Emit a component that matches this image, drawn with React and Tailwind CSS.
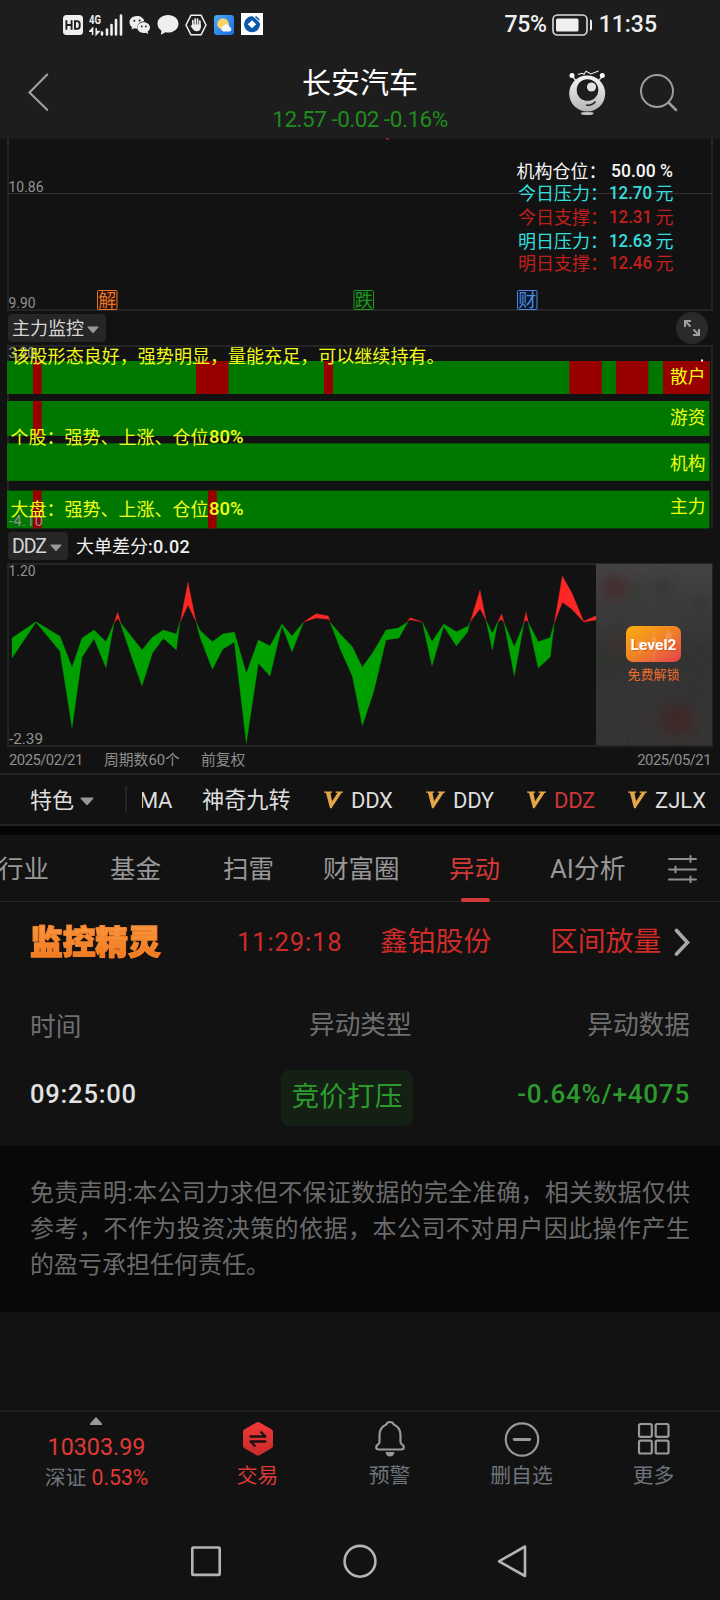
import React from 'react';

const CJK = "font-['Roboto','Noto_Sans_CJK_SC',sans-serif]";

/* ---------- status bar ---------- */
function StatusBar() {
  return (
    <div className="flex h-12 items-center pl-[63px] pr-[63px] pt-px text-[#efefef]">
      <svg width="20" height="20" className="mt-px" viewBox="0 0 20 20">
        <rect width="20" height="20" rx="3.500" fill="#efefef" />
        <path d="M3.400 5.200v9.600M8.600 5.200v9.600M3.400 10h5.200" stroke="#1d1d1d" strokeWidth="1.900" fill="none" />
        <path d="M12 6.100h1.800q2.900 0 2.900 2.600v2.600q0 2.600-2.900 2.600H12z" stroke="#1d1d1d" strokeWidth="1.900" fill="none" />
      </svg>
      <svg width="34" height="24" className="ml-[6px]" viewBox="0 0 34 24">
        <text x="0" y="10.500" fontFamily="Roboto" fontWeight="700" fontSize="12.500" fill="#efefef" textLength="12" lengthAdjust="spacingAndGlyphs">4G</text>
        <path d="M3.600 22v-6M.8 18.300l2.800-3v3zM7.200 15v6M7.200 21.600l2.800-3h-2.800z" stroke="#efefef" strokeWidth="1.500" fill="#efefef" />
        <path d="M13 19.500v2M18 16.500v5M22.500 12v9.500M27 7v14.500M32 2.500v19" stroke="#efefef" strokeWidth="2.600" strokeLinecap="round" />
      </svg>
      <svg width="22" height="20" className="ml-[6px]" viewBox="0 0 22 20">
        <path d="M8 1C3.600 1 .5 3.800.5 7.300c0 2 1 3.700 2.600 4.900l-.7 2.400 2.900-1.300q1.300.4 3 .4C7.600 9.500 11 6.300 15.400 6.300 14.600 3 11.600 1 8 1z" fill="#efefef" />
        <path d="M14.700 7.200c-3.700 0-6.400 2.300-6.400 5.400s2.700 5.400 6.400 5.400q1.100 0 2-.3l2.500 1.300-.6-2.200c1.500-1.100 2.400-2.500 2.400-4.200 0-3.100-2.700-5.400-6.300-5.400z" fill="#efefef" />
        <g fill="#1d1d1d"><circle cx="5.400" cy="5.800" r="1" /><circle cx="10.600" cy="5.400" r="1" /><circle cx="12.700" cy="11.400" r=".9" /><circle cx="16.800" cy="11.400" r=".9" /></g>
      </svg>
      <svg width="22" height="22" className="ml-[6px]" viewBox="0 0 22 22">
        <path d="M11 1C5 1 .5 4.800.5 9.800c0 2.900 1.500 5.300 4 6.900L3.800 20.800l4.700-2.500q1.200.3 2.500.3c6 0 10.500-3.800 10.500-8.800S17 1 11 1z" fill="#efefef" />
      </svg>
      <svg width="22" height="22" className="ml-[6px]" viewBox="0 0 22 22">
        <path d="M6 1.200h10L21 11l-5 9.800H6L1 11z" fill="none" stroke="#efefef" strokeWidth="1.500" strokeLinejoin="round" />
        <path d="M7.800 6.500v6M10.200 4.800v7M12.600 5.200v7M14.900 7v6" stroke="#efefef" strokeWidth="1.700" strokeLinecap="round" />
        <path d="M7 10.500h8.700v3q0 3.700-4 3.700-2.500 0-4-2.200l-2.300-3.300q1-.8 2 .3z" fill="#efefef" />
      </svg>
      <svg width="20" height="20" className="ml-[7px]" viewBox="0 0 20 20">
        <defs><linearGradient id="sky" x1="0" y1="0" x2="1" y2="1"><stop stopColor="#4aa9f6" /><stop offset="1" stopColor="#1a6ce0" /></linearGradient></defs>
        <rect width="20" height="20" rx="3" fill="url(#sky)" />
        <circle cx="9" cy="9" r="5.800" fill="#fbd467" />
        <path d="M9.500 16.500a3 3 0 0 1 .3-5.800 3.400 3.400 0 0 1 6 1.300 2.400 2.400 0 0 1-.3 4.600z" fill="#f4f8fd" />
      </svg>
      <svg width="22" height="22" className="-mt-px ml-[7px]" viewBox="0 0 22 22">
        <rect width="22" height="22" fill="#fff" />
        <circle cx="11" cy="11.300" r="8" fill="#0b57a8" />
        <path d="M11 7.300l4.200 4-4.200 4-4.200-4z" fill="#fff" />
        <path d="M12 2.500l8 7.500" stroke="#fff" strokeWidth="1.200" />
        <path d="M14.500 3.500l3.800 3.500" stroke="#0b57a8" strokeWidth="1.600" />
      </svg>
      <span className="ml-auto mt-px font-['Roboto'] text-[23px] font-medium leading-6 tracking-[-0.300px]">75%</span>
      <svg width="41" height="22" className="ml-[5px]" viewBox="0 0 41 22">
        <rect x="1" y="1" width="34" height="20" rx="4.500" fill="none" stroke="#dcdcdc" strokeWidth="1.600" />
        <rect x="4" y="4.500" width="22.500" height="13" rx="1.500" fill="#efefef" />
        <path d="M38.700 5.500q1.300.5 1.300 2v7q0 1.500-1.300 2h-.7v-11z" fill="#efefef" />
      </svg>
      <span className="ml-[6px] mt-px font-['Roboto'] text-[23px] font-medium leading-6">11:35</span>
    </div>
  );
}

function TitleBar() {
  return (
    <div className="flex h-[90px] items-start justify-between pl-7 pr-[41px]">
      <svg width="22" height="38" className="mt-[25px]" viewBox="0 0 22 38">
        <path d="M19.200 1.500L1.500 19.500l17.700 17.300" fill="none" stroke="#a0a0a0" strokeWidth="2.100" strokeLinecap="round" />
      </svg>
      <div className="ml-[88px] flex w-[260px] flex-col items-center pl-[13px] pt-[18px]">
        <span className="text-[29px] leading-9 text-white">长安汽车</span>
        <span className="mt-[5px] whitespace-nowrap text-[22.500px] leading-6 tracking-[-0.500px] text-[#1f8c1f]">12.57 -0.02 -0.16%</span>
      </div>
      <div className="flex">
        <svg width="38" height="48" className="-ml-px mt-[22px]" viewBox="0 0 38 48">
          <defs><linearGradient id="robot" x1="0" y1="0" x2="0" y2="1"><stop stopColor="#f5f5f5" /><stop offset="1" stopColor="#b5b5b5" /></linearGradient></defs>
          <path d="M5 7l4 5M34 7l-5 5" stroke="#ddd" strokeWidth="1.300" />
          <circle cx="4" cy="5.500" r="2.500" fill="#fff" /><circle cx="34.300" cy="5.500" r="2.500" fill="#fff" />
          <path d="M10 4.500l4-1.200 2 1 2-3 5 2.600 7.500-3" fill="none" stroke="#eee" strokeWidth="1.100" />
          <circle cx="19.200" cy="23.500" r="18" fill="url(#robot)" />
          <circle cx="19.500" cy="20" r="10.800" fill="#1d1d1d" />
          <circle cx="23.500" cy="17" r="4.600" fill="#e0e0e0" />
          <path d="M18 35q6 1 9.500-3.500" fill="none" stroke="#222" strokeWidth="1.500" />
          <ellipse cx="19.200" cy="43.500" rx="6.500" ry="1.600" fill="#c4c4c4" />
        </svg>
        <svg width="40" height="40" className="ml-[33px] mt-[25px]" viewBox="0 0 40 40">
          <circle cx="18" cy="18" r="16" fill="none" stroke="#9c9c9c" strokeWidth="2" />
          <path d="M29.500 29.500l7.500 7.500" stroke="#9c9c9c" strokeWidth="2.600" strokeLinecap="round" />
        </svg>
      </div>
    </div>
  );
}

/* ---------- charts ---------- */
const LEVELS = [
  ['今日压力：', '12.70', 199.500, '#35dede'],
  ['今日支撑：', '12.31', 223.500, '#c01f1c'],
  ['明日压力：', '12.63', 247.500, '#35dede'],
  ['明日支撑：', '12.46', 269.500, '#c01f1c'],
];

function EventTag({ x, label, color, fill }) {
  return (
    <g>
      <rect x={x} y="290.500" width="19.500" height="19" rx="1" fill={fill} stroke={color} strokeWidth="1" />
      <text x={x + 0.800} y="306.500" fontSize="18" fill={color}>{label}</text>
    </g>
  );
}

function PriceChart() {
  return (
    <svg width="720" height="174" viewBox="0 138 720 174" className="block">
      <rect y="138" width="720" height="1" fill="#191919" />
      <path d="M8 138v172h704V138" fill="none" stroke="#252525" strokeWidth="2" />
      <path d="M8 193.500h704" stroke="#303030" />
      <rect x="386" y="138" width="3" height="1.500" fill="#b02020" />
      <g fill="#929292" fontSize="14.500">
        <text x="8.500" y="192" textLength="35" lengthAdjust="spacingAndGlyphs">10.86</text>
        <text x="8.500" y="307.500" textLength="27" lengthAdjust="spacingAndGlyphs">9.90</text>
      </g>
      <g fontSize="18">
        <text x="516.500" y="177.500" fill="#f5f5f5">机构仓位：</text>
        <text x="611" y="177" fill="#f5f5f5" fontWeight="500" textLength="62" lengthAdjust="spacingAndGlyphs">50.00 %</text>
        {LEVELS.map(([name, value, y, color]) => (
          <g key={name} fill={color}>
            <text x="518" y={y}>{name}</text>
            <text x="609" y={y - 0.500} fontWeight="500" textLength="43" lengthAdjust="spacingAndGlyphs">{value}</text>
            <text x="655.500" y={y}>元</text>
          </g>
        ))}
      </g>
      <EventTag x={97.500} label="解" color="#e8762c" fill="#2a1408" />
      <EventTag x={354} label="跌" color="#279427" fill="#0a200a" />
      <EventTag x={517.500} label="财" color="#4f8be0" fill="#0a1626" />
    </svg>
  );
}

const BANDS = [
  { y: 361, h: 33, red: [[33, 8.700], [196, 32.500], [324, 9], [569.300, 32.500], [616, 32.300], [663, 46.500]], label: '散户', ly: 383 },
  { y: 401, h: 35, red: [[33, 8.700]], label: '游资', ly: 423.500 },
  { y: 443.300, h: 37.600, red: [], label: '机构', ly: 469.500 },
  { y: 490.600, h: 37.800, red: [[33, 8.700], [208, 8.700]], label: '主力', ly: 513 },
];

function FlowChart() {
  return (
    <svg width="720" height="186" viewBox="0 344 720 186" className="block">
      <path d="M8 528V346h704v182" fill="none" stroke="#252525" strokeWidth="2" />
      {BANDS.map((b) => (
        <g key={b.label}>
          <rect x="7" y={b.y} width="702.500" height={b.h} fill="#007800" />
          {b.red.map(([x, w]) => <rect key={x} x={x} y={b.y} width={w} height={b.h} fill="#980000" />)}
          <text x="670" y={b.ly} fontSize="17.700" fill="#efff10">{b.label}</text>
        </g>
      ))}
      <rect x="701" y="359.500" width="2" height="2" fill="#fff" />
      <g fill="#929292" fontSize="14.500">
        <text x="8.500" y="358" textLength="27">3.20</text>
        <text x="9" y="526" textLength="34">-4.10</text>
      </g>
      <g fill="#f0ff18" fontSize="18">
        <text x="11.500" y="362.500" textLength="433">该股形态良好，强势明显，量能充足，可以继续持有。</text>
        <text x="10.500" y="443.500" textLength="198">个股：强势、上涨、仓位</text>
        <text x="209" y="443" fontWeight="500" textLength="34.500" lengthAdjust="spacingAndGlyphs">80%</text>
        <text x="10.500" y="515.500" textLength="198">大盘：强势、上涨、仓位</text>
        <text x="209" y="515" fontWeight="500" textLength="34.500" lengthAdjust="spacingAndGlyphs">80%</text>
      </g>
    </svg>
  );
}

const DOWN = [
  'M36 264L108 215 180 259 216 352 246 264 282 240 318 275 342 220 318 353 282 266 246 322 216 533 180 304 108 217 36 324z',
  'M360 216L426 300 457 262 490 240 529 252 540 215 529 300 490 265 457 310 426 408 392 312z',
  'M588 215L601 242 637 275 668 252 703 246 739 370 775 270 810 288 846 222 876 258 911 216 876 306 846 227 810 378 775 340 739 580 703 276 668 298 637 358 601 264z',
  'M990 216L1024 256 1057 290 1087 352 1120 305 1158 240 1195 234 1224 215 1197 264 1158 270 1121 425 1087 527 1057 378 1022 300z',
  'M1267 216L1296 275 1331 222 1369 245 1405 228 1410 214 1403 246 1369 288 1331 229 1296 348z',
  'M1458 211L1477 250 1494 214 1477 300z',
  'M1512 218L1543 290 1572 220 1543 378z',
  'M1584 216L1615 275 1650 263 1663 218 1651 320 1615 354z',
];
const UP = [
  'M342 220L353 187 362 218 353 205z',
  'M541 215L564 97 588 215 564 165z',
  'M911 216L948 191 985 198 990 214 985 208 948 204z',
  'M1223 214L1230 203 1267 216 1230 209z',
  'M1411 215L1440 120 1458 211 1440 176z',
  'M1494 215L1505 192 1513 218 1505 208z',
  'M1571 220L1578 186 1585 216 1578 210z',
  'M1663 219L1687 78 1716 130 1751 214 1788 197 1788 210 1751 216 1716 178 1687 157z',
];

function DdzChart() {
  return (
    <div className="relative">
      <svg width="720" height="186" viewBox="0 562 720 186" className="block">
        <defs>
          <linearGradient id="veil" x1="0" y1="0" x2="0" y2="1"><stop stopColor="#444243" /><stop offset=".5" stopColor="#343333" /><stop offset="1" stopColor="#373434" /></linearGradient>
          <filter id="soft" x="-80%" y="-80%" width="260%" height="260%"><feGaussianBlur stdDeviation="6" /></filter>
          <clipPath id="veilBox"><rect x="596" y="564" width="116" height="181" /></clipPath>
        </defs>
        <path d="M8 564h704v182H8z" fill="none" stroke="#252525" strokeWidth="2" />
        <g transform="translate(0 550) scale(.33333)">
          {DOWN.map((d) => <path key={d} d={d} fill="#00a000" stroke="#00a000" strokeWidth="1" />)}
          {UP.map((d) => <path key={d} d={d} fill="#ff2626" stroke="#e82828" strokeWidth="1" />)}
        </g>
        <g fill="#929292" fontSize="14.500">
          <text x="8.500" y="576" textLength="27" lengthAdjust="spacingAndGlyphs">1.20</text>
          <text x="9" y="743.500" textLength="34" lengthAdjust="spacingAndGlyphs">-2.39</text>
        </g>
        <g clipPath="url(#veilBox)">
          <rect x="596" y="564" width="116" height="181" fill="url(#veil)" />
          <g filter="url(#soft)">
            <circle cx="614" cy="588" r="13" fill="#442f30" />
            <circle cx="634" cy="591" r="7" fill="#303a30" />
            <circle cx="662" cy="590" r="11" fill="#383737" />
            <circle cx="700" cy="603" r="9" fill="#383636" />
            <circle cx="618" cy="644" r="10" fill="#3c302f" />
            <circle cx="604" cy="660" r="10" fill="#2d342d" />
            <circle cx="687" cy="660" r="10" fill="#2d362d" />
            <circle cx="678" cy="720" r="15" fill="#402628" />
            <circle cx="694" cy="694" r="8" fill="#303030" />
            <circle cx="612" cy="738" r="7" fill="#313030" />
          </g>
        </g>
      </svg>
      <div className="absolute left-[596px] top-0 flex w-[115px] flex-col items-center pt-[64px]">
        <div className="relative flex h-9 w-[55px] items-center justify-center rounded-[7px] bg-gradient-to-br from-[#fcae08] via-[#f08125] to-[#e23a48]">
          <svg className="absolute left-0 top-0" width="55" height="36"><path d="M14 12v17M12 16h4v9h-4zM28 6v28M26 12h4v12h-4zM42 3v17M40 7h5v9h-5z" fill="#fff" stroke="#fff" opacity=".16" /></svg>
          <span className="relative mt-[2px] font-['Roboto'] text-[15.500px] font-bold leading-4 text-white [text-shadow:1px_1px_1px_#b0400080]">Level2</span>
        </div>
        <span className="mt-[5px] text-[13px] leading-4 text-[#ea6c2c]">免费解锁</span>
      </div>
    </div>
  );
}

function Caret({ className, width = 12 }) {
  return (
    <svg className={className} width={width} height={width * 0.62} viewBox="0 0 13 8">
      <path d="M1 .5h11q.8.3.3 1L7.200 7.200q-.7.600-1.400 0L.7 1.500Q.2.800 1 .5z" fill="#989898" />
    </svg>
  );
}

/* ---------- indicator tabs ---------- */
function VMark({ className }) {
  return (
    <svg className={className} width="19" height="18" viewBox="0 0 19 18">
      <path d="M0 .5h8.200v1l-1.700.5 1.600 8.300L13.500 2l-2-.5v-1H19v1l-1.500.5L7.500 17.200H6L2 2 0 1.500z" fill="#e2a548" />
    </svg>
  );
}

function IndicatorTabs() {
  return (
    <div className="flex h-[53px] items-center overflow-hidden whitespace-nowrap border-y-2 border-[#252525] pl-[30px] pt-[2px] text-[22px] text-[#dedede]">
      <span className="w-11">特色</span>
      <Caret className="ml-[6px] mt-[2px]" width={14} />
      <div className="-mt-[2px] ml-[31px] h-[27px] w-[2px] bg-[#252525]" />
      <div className="ml-[15px] flex w-[46px] overflow-hidden"><span className="-ml-[3px] tracking-[-0.500px]">MA</span></div>
      <span className="ml-[14px] w-[89px] text-[22.200px]">神奇九转</span>
      <VMark className="-mt-px ml-[33px]" /><span className="ml-[8px] w-[43px] tracking-[-0.300px]">DDX</span>
      <VMark className="-mt-px ml-[32px]" /><span className="ml-[8px] w-[43px] tracking-[-0.300px]">DDY</span>
      <VMark className="-mt-px ml-[31px]" /><span className="ml-[8px] w-[43px] tracking-[-0.300px] text-[#cb3836]">DDZ</span>
      <VMark className="-mt-px ml-[31px]" /><span className="ml-[8px]">ZJLX</span>
    </div>
  );
}

function SectionTabs() {
  return (
    <div className="relative flex h-[67px] items-center whitespace-nowrap border-b border-[#262626] pt-[3px] text-[25.500px] text-[#989898]">
      <span className="-ml-[2px] w-[112px]">行业</span>
      <span className="w-[113px]">基金</span>
      <span className="w-[100px]">扫雷</span>
      <span className="w-[126px]">财富圈</span>
      <span className="w-[101px] text-[#d33a37]">异动</span>
      <span className="w-[118px] text-[25.800px]">AI分析</span>
      <svg width="30" height="28" className="-mt-[2px]" viewBox="0 0 30 28" stroke="#8f8f8f" strokeWidth="2" strokeLinecap="round">
        <path d="M1 4h27M1 14.500h27M1 24.500h27M22.500 1v6M7.500 11.500v6M22.500 21.500v6" />
      </svg>
      <div className="absolute -bottom-px left-[461px] h-1 w-[29px] rounded-sm bg-[#d33a3a]" />
    </div>
  );
}

function Monitor() {
  return (
    <div className="flex h-[244px] flex-col px-[30px] leading-8">
      <div className="mt-[24px] flex h-8 items-center whitespace-nowrap text-[27.800px] text-[#cf2b28]">
        <span className="mt-[2px] w-[207px] bg-gradient-to-b from-[#f99a42] to-[#ee7413] bg-clip-text text-[32.700px] font-black leading-10 text-transparent">
          <span className="[-webkit-text-stroke:1px_#f2842a]">监控精灵</span>
        </span>
        <span className="w-[143px] text-[25.500px] tracking-[0.900px]">11:29:18</span>
        <span className="w-[170px]">鑫铂股份</span>
        <span>区间放量</span>
        <svg className="ml-auto" width="16" height="28" viewBox="0 0 16 28"><path d="M2.500 2.500l11 12-11 11.500" fill="none" stroke="#a8a8a8" strokeWidth="3.600" strokeLinecap="round" /></svg>
      </div>
      <div className="mt-[49px] grid h-8 grid-cols-3 items-center text-[25.700px] text-[#6f6f6f]">
        <span className="mt-[4px]">时间</span>
        <span className="pl-[59px]">异动类型</span>
        <span className="text-right">异动数据</span>
      </div>
      <div className="mt-[31px] grid h-14 grid-cols-[251px_132px_1fr] items-center font-medium">
        <span className="pb-[8px] text-[25.500px] tracking-[0.800px] text-[#e2e2e2]">09:25:00</span>
        <span className="flex h-14 items-center justify-center rounded-lg bg-[#132013] pb-[2px] text-[27.800px] font-normal text-[#2c9a2c]">竞价打压</span>
        <span className="pb-[8px] text-right text-[26px] tracking-[0.800px] text-[#2c9a2c]">-0.64%/+4075</span>
      </div>
    </div>
  );
}

/* ---------- bottom bar ---------- */
function BottomItem({ label, active, children }) {
  return (
    <div className={active ? 'flex flex-col items-center text-[#dc3a36]' : 'flex flex-col items-center text-[#6d747b]'}>
      <svg width="36" height="38" viewBox="0 0 36 38" className="mt-[8px]" fill="none" stroke="#999" strokeWidth="2.200">{children}</svg>
      <span className="mt-[6px] text-[20.800px] leading-6">{label}</span>
    </div>
  );
}

function BottomBar() {
  return (
    <div className="grid h-[101px] grid-cols-[192px_131px_133px_131px_133px] border-t-2 border-[#1e1e1e]">
      <div className="flex flex-col items-center">
        <svg width="12" height="8" viewBox="0 0 12 8" className="mt-[5px]"><path d="M6 0l6 6.500V8H0V6.500z" fill="#999" /></svg>
        <span className="mt-[10px] pl-px text-[23.300px] leading-6 text-[#e03a35]">10303.99</span>
        <span className="mt-[7px] whitespace-nowrap pl-px text-[21.200px] leading-6 text-[#e03a35]"><span className="text-[20.800px] text-[#6d747b]">深证</span> 0.53%</span>
      </div>
      <BottomItem label="交易" active>
        <defs><linearGradient id="hex" x1="0" y1="0" x2="0" y2="1"><stop stopColor="#f03838" /><stop offset="1" stopColor="#c92b2b" /></linearGradient></defs>
        <path d="M16.500 2.500q1.500-.8 3 0l12 6.800q1.500.8 1.500 2.500v14q0 1.700-1.500 2.500l-12 6.900q-1.500.8-3 0l-12-6.900Q3 27.500 3 25.800v-14q0-1.700 1.500-2.500z" fill="url(#hex)" stroke="none" />
        <path d="M10.500 16.500h15l-4.300-4.300M25.500 21.500h-15l4.300 4.300" stroke="#1a1212" strokeWidth="2.300" strokeLinecap="round" strokeLinejoin="round" />
      </BottomItem>
      <BottomItem label="预警">
        <path d="M14.300 4.500Q15 2 18 2t3.700 2.500q6.800 3 6.800 10.500v7q0 1.500 1.800 2.700 1.700 1.300 1.500 3-.2 1.800-2.300 1.800h-23q-2.100 0-2.300-1.800-.2-1.700 1.500-3 1.800-1.200 1.800-2.700v-7q0-7.500 6.800-10.500z" />
        <path d="M13.500 32h9q-.8 4.500-4.500 4.500T13.500 32z" fill="#999" stroke="none" />
      </BottomItem>
      <BottomItem label="删自选">
        <circle cx="18" cy="19.500" r="16.200" />
        <path d="M10.200 19.500h15.500" strokeLinecap="round" strokeWidth="2.800" />
      </BottomItem>
      <BottomItem label="更多">
        <rect x="3" y="4" width="12.800" height="12.800" rx="1.500" />
        <rect x="19.700" y="4" width="12.800" height="12.800" rx="1.500" />
        <rect x="3" y="20.700" width="12.800" height="12.800" rx="1.500" />
        <rect x="19.700" y="20.700" width="12.800" height="12.800" rx="1.500" />
      </BottomItem>
    </div>
  );
}

export default function App() {
  return (
    <div className={`flex h-[1600px] w-[720px] flex-col overflow-hidden bg-[#121212] font-normal ${CJK}`}>
      <header className="h-[138px] bg-[#1d1d1d]">
        <StatusBar />
        <TitleBar />
      </header>

      <PriceChart />
      <div className="flex h-8 items-start justify-between pl-2 pr-[12px] pt-[2px]">
        <div className="flex h-7 w-[98px] items-center rounded-sm bg-[#262626] pl-[4px] text-[18px] text-[#d6d6d6]">
          <span className="mt-px">主力监控</span><Caret className="ml-[3px] mt-[3px]" />
        </div>
        <div className="-mt-[2px] flex size-8 items-center justify-center rounded-full bg-[#2a2a2a]">
          <svg width="18" height="18" viewBox="0 0 18 18" fill="none" stroke="#a0a0a0" strokeWidth="2"><path d="M2 8V2h6M2 2l5.500 5.500M16 10v6h-6M16 16l-5.500-5.500" /></svg>
        </div>
      </div>
      <FlowChart />
      <div className="flex h-8 items-start pl-2 pt-[2px] text-[18px]">
        <div className="flex h-7 w-[60px] items-center rounded-sm bg-[#262626] pl-[4px] text-[#d6d6d6]">
          <span className="mt-[2px] w-[34px] text-[19.500px] tracking-[-1px]">DDZ</span><Caret className="ml-[4px] mt-[3px]" />
        </div>
        <span className="ml-[8px] mt-px whitespace-nowrap leading-7 text-[#f0f0f0]">大单差分<span className="font-medium tracking-[0.300px]">:0.02</span></span>
      </div>
      <DdzChart />
      <div className="flex h-[25px] items-center whitespace-nowrap pl-[9px] pr-[9px] text-[14.800px] text-[#8e8e8e]">
        <span className="w-[95px] tracking-[-0.500px]">2025/02/21</span>
        <span className="w-[97px]">周期数60个</span>
        <span>前复权</span>
        <span className="ml-auto tracking-[-0.500px]">2025/05/21</span>
      </div>
      <IndicatorTabs />
      <div className="h-[9px] bg-[#050505]" />
      <SectionTabs />
      <Monitor />
      <div className="h-[264px] shrink-0">
        <p className="bg-[#080808] px-[30px] py-[29px] text-justify text-[24px] leading-9 text-[#6b6b6b]">
          免责声明:本公司力求但不保证数据的完全准确，相关数据仅供参考，不作为投资决策的依据，本公司不对用户因此操作产生的盈亏承担任何责任。
        </p>
      </div>
      <BottomBar />
      <div className="flex flex-1 items-start pl-[190px] pt-[33px]">
        <svg width="340" height="36" viewBox="0 0 340 36" fill="none" stroke="#b4b4b4" strokeWidth="2.600" strokeLinejoin="round">
          <rect x="2.300" y="3.500" width="27.400" height="27.400" rx="1" />
          <circle cx="170" cy="17.300" r="15.400" />
          <path d="M335 2.500v29.500L309 17.300z" />
        </svg>
      </div>
    </div>
  );
}
